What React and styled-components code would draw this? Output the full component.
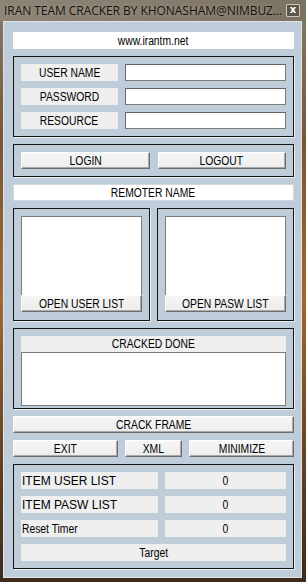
import styled, { createGlobalStyle } from "styled-components";

const Global = createGlobalStyle`
  html, body {
    margin: 0;
    padding: 0;
    background: #4a3522;
  }
  body {
    font-family: "Liberation Sans", Arial, sans-serif;
  }
  * {
    box-sizing: border-box;
  }
`;

const Window = styled.div`
  width: 306px;
  height: 582px;
  display: flex;
  flex-direction: column;
  padding: 0 4px 4px 3px;
  background: linear-gradient(
    180deg,
    #857b6c 0px,
    #80705c 40px,
    #7a5534 140px,
    #a0672e 300px,
    #6b4524 440px,
    #3d2a19 582px
  );
`;

const TitleBar = styled.div`
  height: 21px;
  display: flex;
  align-items: center;
  justify-content: space-between;
  margin: 0 -4px 0 -3px;
  padding: 0 3px 1px 4px;
  background: linear-gradient(90deg, #8d8475 0%, #857b6c 60%, #7c7262 100%);
`;

const Title = styled.span`
  font-family: "Open Sans", "Noto Sans", sans-serif;
  font-size: 12px;
  color: #141414;
  letter-spacing: -0.05px;
  white-space: nowrap;
  text-shadow: 0 0 4px rgba(220, 210, 190, 0.45);
`;

const CloseButton = styled.div`
  width: 14px;
  height: 13px;
  margin-right: 3px;
  display: flex;
  align-items: center;
  justify-content: center;
  background: #5f5548;
  border: 1px solid #cfc7ba;
  border-radius: 1px;
  color: #fff;
  font-family: "DejaVu Sans", sans-serif;
  font-weight: bold;
  font-size: 10px;
  line-height: 1;
`;

const Client = styled.div`
  flex: 1;
  display: flex;
  flex-direction: column;
  gap: 7px;
  padding: 10px 7px 0 9px;
  background: #bfcddb;
  border: 1px solid #dfe4e8;
`;

/* the original UI font is a tall, narrow bitmap sans: squeeze Liberation Sans */
const Text = styled.span`
  display: inline-block;
  font-size: 12px;
  line-height: 1;
  color: #000;
  white-space: nowrap;
  transform: scaleX(${(p) => (p.wide ? 1 : 0.86)});
  transform-origin: ${(p) => (p.left ? "left center" : "center")};
`;

const Field = styled.div`
  height: ${(p) => p.h || 17}px;
  display: flex;
  align-items: center;
  justify-content: ${(p) => (p.left ? "flex-start" : "center")};
  padding-left: ${(p) => (p.left ? "1px" : "0")};
  background: ${(p) => (p.white ? "#ffffff" : "#efefef")};
  border: ${(p) => (p.framed ? "1px solid #d2d8de" : "none")};
  overflow: hidden;
`;

const Panel = styled.div`
  height: ${(p) => p.h}px;
  padding: ${(p) => p.pad || "7px"};
  border: 1px solid #161616;
  box-shadow: 1px 1px 0 #e9eef3;
  display: flex;
  flex-direction: column;
  gap: ${(p) => p.gap ?? 7}px;
`;

const Row = styled.div`
  display: grid;
  grid-template-columns: ${(p) => p.cols};
  column-gap: ${(p) => p.gap ?? 7}px;
  height: 17px;
`;

const Input = styled.div`
  height: 17px;
  background: #fff;
  border: 1px solid #7b7b7b;
  border-top-color: #646464;
  border-left-color: #6a6a6a;
`;

const Button = styled.div`
  height: 17px;
  display: flex;
  align-items: center;
  justify-content: center;
  background: linear-gradient(180deg, #f6f6f6, #ececec);
  border: 1px solid;
  border-color: #ffffff #6e6e6e #6e6e6e #ffffff;
  box-shadow: inset -1px -1px 0 #a9a9a9;
  overflow: hidden;
`;

const ListsRow = styled.div`
  display: grid;
  grid-template-columns: 137px 137px;
  column-gap: 7px;
`;

const ListBox = styled.div`
  height: ${(p) => p.h}px;
  background: #fff;
  border: 1px solid #7d7d7d;
  border-bottom: ${(p) => (p.closed ? "1px solid #7d7d7d" : "none")};
`;

const Column = styled.div`
  display: flex;
  flex-direction: column;
`;

const BottomRow = styled.div`
  display: grid;
  grid-template-columns: 105px 57px 105px;
  column-gap: 7px;
`;

function ListPanel({ label }) {
  return (
    <Panel h={113}>
      <Column>
        <ListBox h={79} />
        <Button>
          <Text>{label}</Text>
        </Button>
      </Column>
    </Panel>
  );
}

function StatRow({ label, value, wide }) {
  return (
    <Row cols="137px 121px">
      <Field left>
        <Text left wide={wide}>
          {label}
        </Text>
      </Field>
      <Field>
        <Text>{value}</Text>
      </Field>
    </Row>
  );
}

function LoginRow({ label }) {
  return (
    <Row cols="97px 161px">
      <Field>
        <Text>{label}</Text>
      </Field>
      <Input />
    </Row>
  );
}

export default function App() {
  return (
    <>
      <Global />
      <Window>
        <TitleBar>
          <Title>IRAN TEAM CRACKER BY KHONASHAM@NIMBUZ...</Title>
          <CloseButton>x</CloseButton>
        </TitleBar>
        <Client>
          <Field white>
            <Text>www.irantm.net</Text>
          </Field>

          <Panel h={81}>
            <LoginRow label="USER NAME" />
            <LoginRow label="PASSWORD" />
            <LoginRow label="RESOURCE" />
          </Panel>

          <Panel h={33}>
            <Row cols="1fr 1fr" gap={8}>
              <Button>
                <Text>LOGIN</Text>
              </Button>
              <Button>
                <Text>LOGOUT</Text>
              </Button>
            </Row>
          </Panel>

          <Field white framed>
            <Text>REMOTER NAME</Text>
          </Field>

          <ListsRow>
            <ListPanel label="OPEN USER LIST" />
            <ListPanel label="OPEN PASW LIST" />
          </ListsRow>

          <Panel h={81} pad="7px 7px 2px" gap={0}>
            <Field h={16}>
              <Text>CRACKED DONE</Text>
            </Field>
            <ListBox h={54} closed />
          </Panel>

          <Button>
            <Text>CRACK FRAME</Text>
          </Button>

          <BottomRow>
            <Button>
              <Text>EXIT</Text>
            </Button>
            <Button>
              <Text>XML</Text>
            </Button>
            <Button>
              <Text>MINIMIZE</Text>
            </Button>
          </BottomRow>

          <Panel h={105}>
            <StatRow label="ITEM USER LIST" value="0" wide />
            <StatRow label="ITEM PASW LIST" value="0" wide />
            <StatRow label="Reset Timer" value="0" />
            <Field>
              <Text>Target</Text>
            </Field>
          </Panel>
        </Client>
      </Window>
    </>
  );
}
